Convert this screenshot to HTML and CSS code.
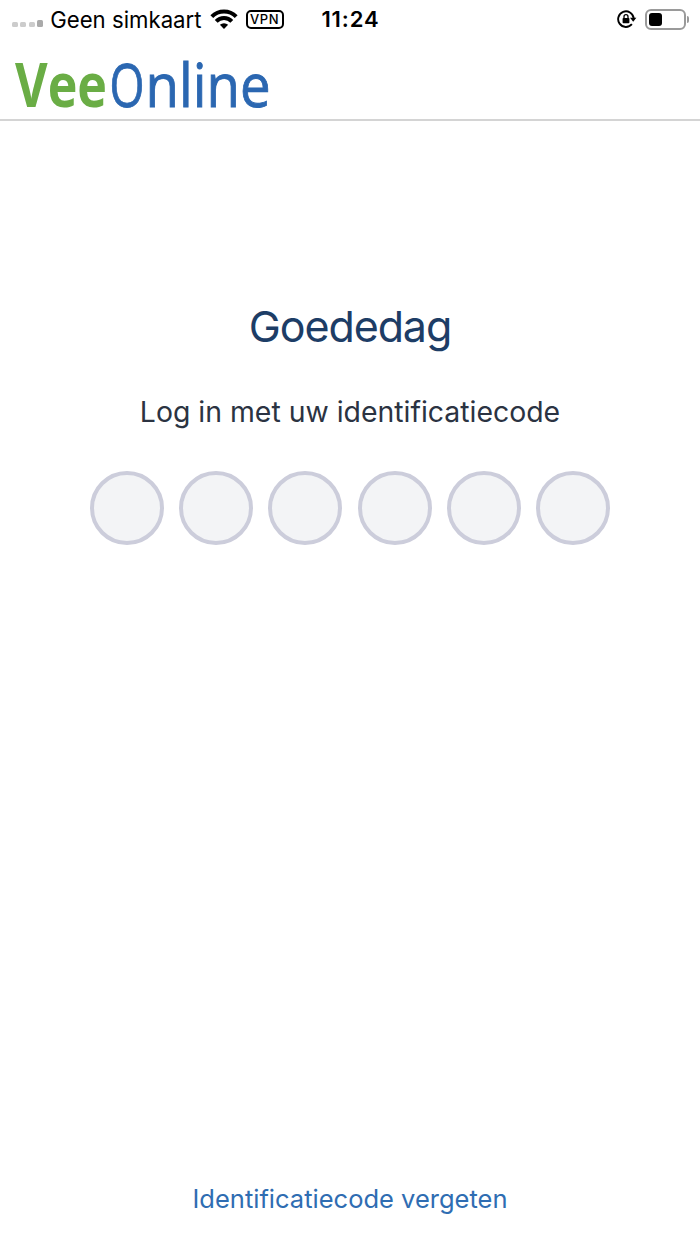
FILE: index.html
```html
<!DOCTYPE html>
<html lang="nl">
  <head>
    <meta charset="UTF-8" />
    <meta name="viewport" content="width=device-width, initial-scale=1.0" />
    <title>VeeOnline</title>
    <link rel="stylesheet" href="styles.css">
  </head>
  <body>
    <div class="status-bar">
      <div class="status-left">
        <div class="signal"><i></i><i></i><i></i><i class="last"></i></div>
        <span class="carrier">Geen simkaart</span>
        <svg class="wifi" width="28" height="20" viewBox="0 0 28 20">
          <g fill="none" stroke="#000" stroke-width="4">
            <path d="M1.8 7.6a17.3 17.3 0 0 1 24.4 0" />
            <path d="M6.2 12.3a10.9 10.9 0 0 1 15.6 0" />
          </g>
          <path d="M14 20l-4.1-4.2a5.9 5.9 0 0 1 8.2 0z" />
        </svg>
        <span class="vpn">VPN</span>
      </div>
      <div class="clock">11:24</div>
      <div class="status-right">
        <svg class="rotation-lock" width="20" height="18" viewBox="0 0 20 18">
          <path d="M14.9 14.2A7.8 7.8 0 1 1 16.7 8.2" fill="none" stroke="#000" stroke-width="1.9" />
          <path d="M13 7.8h6.4l-3.2 3.9z" />
          <rect x="5.6" y="8" width="6.8" height="5.2" rx="0.8" />
          <path d="M7 8.4V6.7a2 2 0 0 1 4 0v1.7" fill="none" stroke="#000" stroke-width="1.3" />
        </svg>
        <div class="battery"><div class="level"></div></div>
        <div class="battery-tip"></div>
      </div>
    </div>

    <header class="header">
      <svg class="logo" width="270" height="79" viewBox="0 0 270 79">
        <text class="logo-vee" x="0" y="67" textLength="92" lengthAdjust="spacingAndGlyphs">Vee</text>
        <text class="logo-online" x="94.5" y="67" textLength="35" lengthAdjust="spacingAndGlyphs">O</text>
        <text class="logo-online" x="130.5" y="67" textLength="125" lengthAdjust="spacingAndGlyphs">nline</text>
      </svg>
    </header>

    <main class="login">
      <h1 class="greeting">Goededag</h1>
      <p class="instruction">Log in met uw identificatiecode</p>
      <div class="code">
        <span class="digit"></span>
        <span class="digit"></span>
        <span class="digit"></span>
        <span class="digit"></span>
        <span class="digit"></span>
        <span class="digit"></span>
      </div>
      <a class="forgot">Identificatiecode vergeten</a>
    </main>
  </body>
</html>
```
FILE: styles.css
```css
* {
  box-sizing: border-box;
}

body {
  margin: 0;
  height: 100vh;
  display: flex;
  flex-direction: column;
  overflow: hidden;
  background: #fff;
  font-family: Inter, "Liberation Sans", sans-serif;
}

.status-bar {
  height: 40px;
  display: grid;
  grid-template-columns: 1fr auto 1fr;
  align-items: center;
  padding: 0 11px 2px 12px;
  color: #000;
}

.status-left,
.status-right {
  display: flex;
  align-items: center;
}

.status-right {
  justify-content: flex-end;
}

.signal {
  display: flex;
  align-items: flex-end;
  gap: 2.4px;
  margin: 9px 7px 0 0;
}

.signal i {
  width: 6px;
  height: 5.5px;
  border-radius: 1.5px;
  background: #ccc;
}

.signal .last {
  height: 7.5px;
  background: #aaa;
}

.carrier {
  font-size: 22.2px;
  white-space: nowrap;
}

.wifi {
  margin-left: 8px;
}

.vpn {
  width: 38px;
  height: 19px;
  margin-left: 8px;
  border: 2px solid #000;
  border-radius: 5px;
  font-size: 13px;
  font-weight: 500;
  line-height: 15px;
  text-align: center;
  letter-spacing: 0.6px;
}

.clock {
  font-size: 22px;
  font-weight: 600;
  letter-spacing: 0.9px;
}

.rotation-lock {
  margin-right: 8px;
}

.battery {
  width: 41px;
  height: 21px;
  padding: 2px;
  border: 2px solid #9a9a9a;
  border-radius: 6px;
}

.level {
  width: 13px;
  height: 13px;
  border-radius: 3px;
  background: #000;
}

.battery-tip {
  width: 2px;
  height: 7px;
  margin-left: 1.5px;
  border-radius: 0 2px 2px 0;
  background: #9a9a9a;
}

.header {
  height: 81px;
  padding-left: 15px;
  border-bottom: 2px solid #d4d4d4;
}

.logo {
  display: block;
  overflow: visible;
  font-family: "Open Sans", "Noto Sans", sans-serif;
  font-size: 61px;
}

.logo-vee {
  fill: #6aad45;
  font-weight: 700;
}

.logo-online {
  fill: #2b67b1;
  stroke: #2b67b1;
  stroke-width: 0.9px;
}

.login {
  flex: 1;
  display: flex;
  flex-direction: column;
  align-items: center;
  padding: 175px 0 28px;
}

.greeting {
  margin: 0;
  color: #1d3d66;
  font-size: 43px;
  font-weight: 400;
  line-height: 60px;
  letter-spacing: -1.1px;
}

.instruction {
  margin: 36px 0 0;
  color: #2b3342;
  font-size: 28.4px;
  line-height: 40px;
}

.code {
  width: 520px;
  display: flex;
  justify-content: space-between;
  margin-top: 39px;
}

.digit {
  width: 74px;
  height: 74px;
  border: 4px solid #cccddb;
  border-radius: 50%;
  background: #f3f4f6;
}

.forgot {
  margin-top: auto;
  color: #2f6db2;
  font-size: 25.5px;
  line-height: 34px;
}
```
